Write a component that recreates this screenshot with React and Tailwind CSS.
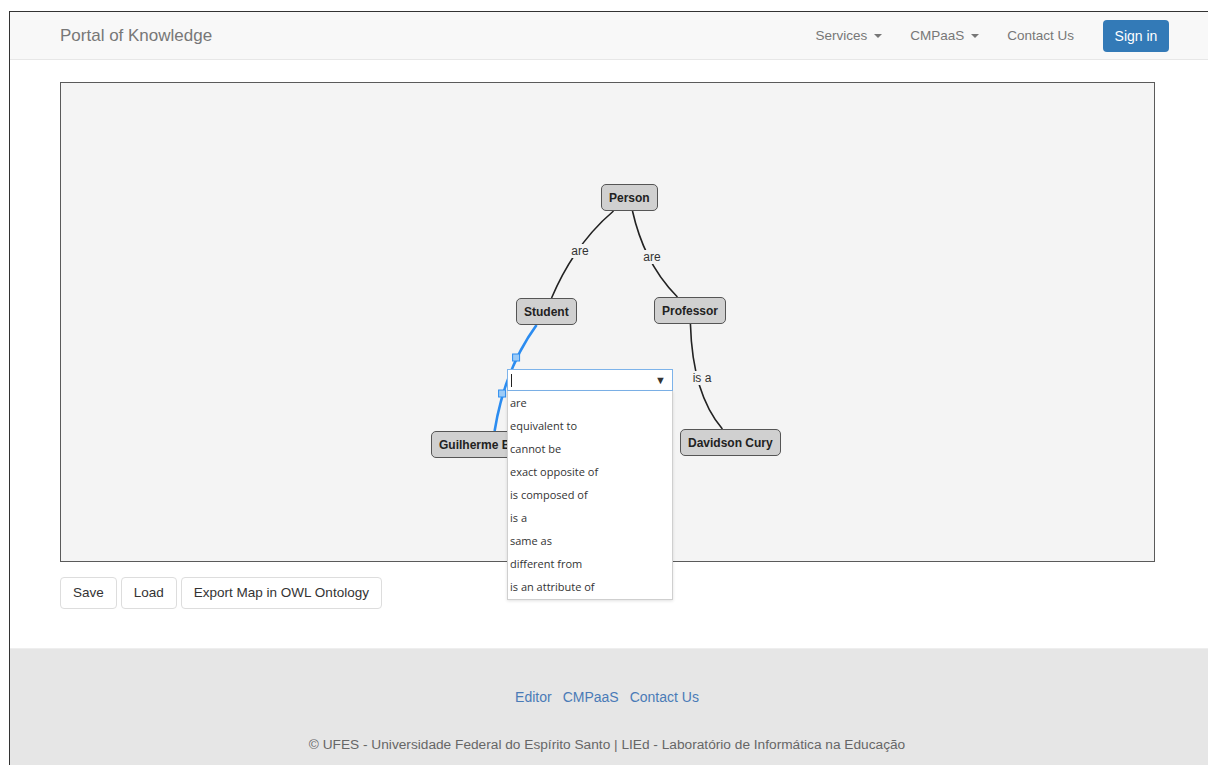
import React from 'react';

const nodes = [
  { label: 'Person', left: 540, top: 101 },
  { label: 'Student', left: 455, top: 215 },
  { label: 'Professor', left: 593, top: 214 },
  { label: 'Guilherme Bittencourt', left: 370, top: 348 },
  { label: 'Davidson Cury', left: 619, top: 346 },
];

const edgeLabels = [
  { text: 'are', x: 519, y: 168 },
  { text: 'are', x: 591, y: 174 },
  { text: 'is a', x: 641, y: 295 },
];

const relations = [
  'are',
  'equivalent to',
  'cannot be',
  'exact opposite of',
  'is composed of',
  'is a',
  'same as',
  'different from',
  'is an attribute of',
];

const Caret = () => (
  <span className="ml-[7px] inline-block w-0 h-0 border-t-[4px] border-t-[#777] border-x-[4px] border-x-transparent align-middle" />
);

const ConceptMap = () => (
  <div className="relative h-[480px] border border-[#5a5a5a] bg-[#f4f4f4]">
    {/* links between concepts, drawn in page coordinates */}
    <svg className="absolute inset-0 w-full h-full" viewBox="61 84 1094 478" preserveAspectRatio="none">
      <path d="M614 212 Q575 245 552 299" fill="none" stroke="#222" strokeWidth="1.6" />
      <path d="M633 212 Q645 265 678 298" fill="none" stroke="#222" strokeWidth="1.6" />
      <path d="M691 325 Q693 395 723 430" fill="none" stroke="#222" strokeWidth="1.6" />
      <path d="M537 326 Q505 370 495 432" fill="none" stroke="#2b8cf0" strokeWidth="2.6" />
      <rect x="513" y="355" width="7" height="7" fill="#9ccbf7" stroke="#2b8cf0" strokeWidth="1" />
      <rect x="499" y="391" width="7" height="7" fill="#9ccbf7" stroke="#2b8cf0" strokeWidth="1" />
    </svg>

    {edgeLabels.map((l, i) => (
      <span
        key={i}
        className="absolute -translate-x-1/2 -translate-y-1/2 bg-[#f4f4f4] text-[12px] leading-[14px] text-[#333] px-[1px]"
        style={{ left: l.x, top: l.y }}
      >
        {l.text}
      </span>
    ))}

    {nodes.map((n) => (
      <div
        key={n.label}
        className="absolute h-[27px] flex items-center px-[7px] rounded-[5px] border border-[#555] bg-[#d0d0d0] text-[12px] font-bold text-[#222] whitespace-nowrap"
        style={{ left: n.left, top: n.top }}
      >
        {n.label}
      </div>
    ))}

    {/* relation picker for the selected link */}
    <div className="absolute left-[446px] top-[286px] w-[166px] z-10 font-['Open_Sans',sans-serif]">
      <div className="h-[22px] bg-white border border-[#7db3ea] flex items-center justify-between pl-[3px] pr-[6px]">
        <span className="w-px h-[13px] bg-[#222]" />
        <span className="text-[11px] text-[#333]">▼</span>
      </div>
      <ul className="bg-white border border-t-0 border-[#cfcfcf] shadow-[0_1px_3px_rgba(0,0,0,0.12)] pt-[1px]">
        {relations.map((r) => (
          <li key={r} className="h-[23px] flex items-center pl-[2px] text-[11px] text-[#333]">
            {r}
          </li>
        ))}
      </ul>
    </div>
  </div>
);

export default function App() {
  return (
    <div className="min-h-screen bg-white pt-[11px] pl-[9px] font-['Liberation_Sans',Arial,sans-serif]">
      <div className="border-l-[1.5px] border-t-[1.5px] border-[#333] min-h-[754px] flex flex-col">
        {/* Navbar */}
        <nav className="h-[48px] bg-[#f8f8f8] border-b border-[#e7e7e7] flex items-center pl-[50px] pr-[39px]">
          <span className="text-[17px] text-[#777] pt-[1px]">Portal of Knowledge</span>
          <div className="ml-auto flex items-center text-[13.5px] text-[#777] pt-[1px]">
            <span className="flex items-center">Services<Caret /></span>
            <span className="flex items-center ml-[28px]">CMPaaS<Caret /></span>
            <span className="ml-[28px]">Contact Us</span>
            <button className="ml-[29px] h-[32px] w-[66px] rounded-[4px] bg-[#337ab7] text-white text-[14px]">Sign in</button>
          </div>
        </nav>

        {/* Editor */}
        <main className="pl-[50px] pr-[53px] pt-[22px]">
          <ConceptMap />
          <div className="mt-[15px] flex gap-[4px]">
            {['Save', 'Load', 'Export Map in OWL Ontology'].map((b) => (
              <button
                key={b}
                className="h-[32px] px-[12px] rounded-[4px] border border-[#ddd] bg-white text-[13.5px] text-[#333]"
              >
                {b}
              </button>
            ))}
          </div>
        </main>

        {/* Footer */}
        <footer className="mt-[39px] flex-1 bg-[#e6e6e6] border-t border-[#eee] flex flex-col items-center pt-[38px] pr-[4px]">
          <div className="flex gap-[11px] text-[14px] text-[#4a7bb7]">
            <span>Editor</span>
            <span>CMPaaS</span>
            <span>Contact Us</span>
          </div>
          <p className="mt-[27px] text-[13.7px] text-[#666]">
            © UFES - Universidade Federal do Espírito Santo | LIEd - Laboratório de Informática na Educação
          </p>
        </footer>
      </div>
    </div>
  );
}
